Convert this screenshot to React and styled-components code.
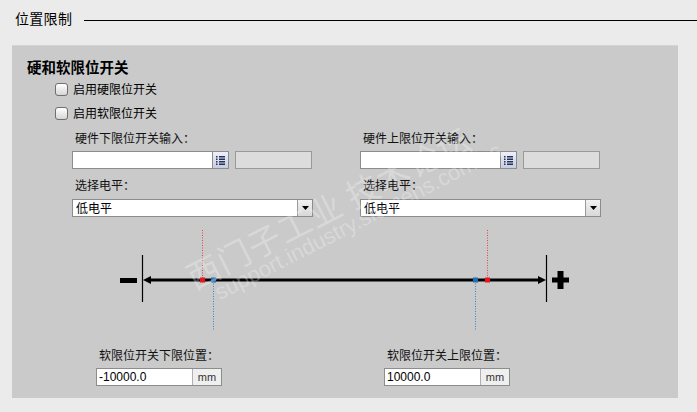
import React from "react";
import styled, { createGlobalStyle } from "styled-components";

const GlobalStyle = createGlobalStyle`
  body {
    margin: 0;
    background: #ebebeb;
    font-family: "Noto Sans CJK SC", "Liberation Sans", sans-serif;
    color: #000;
  }
`;

function App() {
  return (
    <Page>
      <GlobalStyle />
      <TitleRow>
        <Title>位置限制</Title>
        <Rule />
      </TitleRow>
      <Panel>
        <Heading>硬和软限位开关</Heading>
        <CheckRow>
          <CheckBox />
          <span>启用硬限位开关</span>
        </CheckRow>
        <CheckRow>
          <CheckBox />
          <span>启用软限位开关</span>
        </CheckRow>
        <Columns left={60} gap={47}>
          <Field label="硬件下限位开关输入：" />
          <Field label="硬件上限位开关输入：" />
        </Columns>
        <AxisDiagram />
        <Columns left={84} gap={162}>
          <LimitField label="软限位开关下限位置：" value="-10000.0" />
          <LimitField label="软限位开关上限位置：" value="10000.0" />
        </Columns>
      </Panel>
      <Watermark>
        <span>西门子工业 技术论坛</span>
        <small>support.industry.siemens.com/cs</small>
      </Watermark>
    </Page>
  );
}

function Field({ label }) {
  return (
    <Column>
      <Label>{label}</Label>
      <InputRow>
        <TextBox />
        <ListButton>
          <svg width="9" height="9" viewBox="0 0 9 9">
            <g fill="#23325a">
              <rect x="0" y="0" width="1.5" height="1.5" />
              <rect x="0" y="2.5" width="1.5" height="1.5" />
              <rect x="0" y="5" width="1.5" height="1.5" />
              <rect x="0" y="7.5" width="1.5" height="1.5" />
              <rect x="3" y="0" width="6" height="1.5" />
              <rect x="3" y="2.5" width="6" height="1.5" />
              <rect x="3" y="5" width="6" height="1.5" />
              <rect x="3" y="7.5" width="6" height="1.5" />
            </g>
          </svg>
        </ListButton>
        <GrayBox />
      </InputRow>
      <Label second>选择电平：</Label>
      <Select>
        <SelectText>低电平</SelectText>
        <SelectArrow>
          <svg width="7" height="4" viewBox="0 0 7 4">
            <polygon points="0,0 7,0 3.5,4" fill="#000" />
          </svg>
        </SelectArrow>
      </Select>
    </Column>
  );
}

function LimitField({ label, value }) {
  return (
    <LimitColumn>
      <Label>{label}</Label>
      <NumberBox>
        <NumberValue>{value}</NumberValue>
        <Unit>mm</Unit>
      </NumberBox>
    </LimitColumn>
  );
}

function AxisDiagram() {
  return (
    <Axis width="666" height="112" viewBox="0 0 666 112">
      <rect x="108" y="55" width="17" height="5" fill="#000" />
      <line x1="130.5" y1="32" x2="130.5" y2="79" stroke="#000" strokeWidth="1.2" />
      <line x1="534.5" y1="32" x2="534.5" y2="79" stroke="#000" strokeWidth="1.2" />
      <rect x="136" y="55.5" width="390" height="3" fill="#000" />
      <polygon points="131,57 139,53 139,61" fill="#000" />
      <polygon points="534,57 526,53 526,61" fill="#000" />
      <rect x="540" y="54.5" width="17" height="5" fill="#000" />
      <rect x="545.5" y="48" width="6" height="18" fill="#000" />
      <line x1="190.5" y1="7" x2="190.5" y2="56" stroke="#e04848" strokeWidth="1" strokeDasharray="1 1.5" />
      <line x1="201.5" y1="58" x2="201.5" y2="108" stroke="#3a86c8" strokeWidth="1" strokeDasharray="1 1.5" />
      <line x1="475.5" y1="7" x2="475.5" y2="56" stroke="#e04848" strokeWidth="1" strokeDasharray="1 1.5" />
      <line x1="463.5" y1="58" x2="463.5" y2="108" stroke="#3a86c8" strokeWidth="1" strokeDasharray="1 1.5" />
      <rect x="188" y="54.5" width="5" height="5" fill="#e8141e" />
      <rect x="199" y="54.5" width="5" height="5" fill="#1f6fb5" />
      <rect x="461" y="54.5" width="5" height="5" fill="#1f6fb5" />
      <rect x="473" y="54.5" width="5" height="5" fill="#e8141e" />
    </Axis>
  );
}

const Page = styled.div`
  position: relative;
  width: 697px;
  height: 412px;
  overflow: hidden;
  background: #ebebeb;
`;

const TitleRow = styled.div`
  display: flex;
  align-items: center;
  height: 20px;
  padding: 8px 0 0 15px;
`;

const Title = styled.div`
  font-size: 14px;
  line-height: 20px;
  letter-spacing: 0.3px;
`;

const Rule = styled.div`
  flex: 1;
  height: 1px;
  margin: 4px 0 0 12px;
  background: #000;
`;

const Panel = styled.div`
  height: 353px;
  margin: 17px 19px 0 12px;
  background: #cacaca;
  border-top: 1px solid #d4d4d4;
  box-sizing: border-box;
  font-size: 12px;
`;

const Heading = styled.div`
  margin: 12px 0 0 15px;
  height: 18px;
  line-height: 18px;
  font-size: 14.5px;
  font-weight: bold;
`;

const CheckRow = styled.div`
  display: flex;
  align-items: center;
  gap: 5px;
  height: 24px;
  padding-left: 43px;
  font-size: 12px;

  &:first-of-type {
    margin-top: 2px;
  }
`;

const CheckBox = styled.span`
  display: inline-block;
  width: 11px;
  height: 11px;
  border: 1px solid #6f6f6f;
  border-radius: 3px;
  background: linear-gradient(#ffffff, #d6d6d6);
  margin-top: 2px;
  & + span {
    margin-top: 1px;
  }
`;

const Columns = styled.div`
  display: flex;
  gap: ${(p) => p.gap}px;
  padding-left: ${(p) => p.left}px;
  margin-top: 5px;
`;

const Column = styled.div`
  display: flex;
  flex-direction: column;
  width: 241px;
`;

const LimitColumn = styled.div`
  display: flex;
  flex-direction: column;
  width: 126px;
  margin-top: 6px;
`;

const Label = styled.div`
  height: 18px;
  line-height: 18px;
  padding-left: 3px;
  font-size: 12px;
  color: #111;
  margin-top: ${(p) => (p.second ? 7 : 0)}px;
  margin-bottom: ${(p) => (p.second ? 5 : 4)}px;
`;

const InputRow = styled.div`
  display: flex;
  height: 18px;
`;

const TextBox = styled.div`
  width: 139px;
  border: 1px solid #8c8c8c;
  border-right: none;
  background: #fff;
`;

const ListButton = styled.div`
  display: flex;
  align-items: center;
  justify-content: center;
  width: 15px;
  border: 1px solid #8c8c8c;
  background: linear-gradient(#eef0f8, #c8cce0);
`;

const GrayBox = styled.div`
  width: 75px;
  margin-left: 6px;
  border: 1px solid #9a9a9a;
  background: #dcdcdc;
`;

const Select = styled.div`
  display: flex;
  height: 18px;
  box-sizing: border-box;
  border: 1px solid #8c8c8c;
  background: #fff;
`;

const SelectText = styled.div`
  flex: 1;
  padding-left: 3px;
  line-height: 16px;
  font-size: 12px;
`;

const SelectArrow = styled.div`
  display: flex;
  align-items: center;
  justify-content: center;
  width: 14px;
  border-left: 1px solid #9a9a9a;
  background: linear-gradient(#f2f2f2, #d8d8d8);
`;

const Axis = styled.svg`
  display: block;
  margin-top: 6px;
`;

const NumberBox = styled.div`
  display: flex;
  height: 18px;
  box-sizing: border-box;
  border: 1px solid #8c8c8c;
  background: #fff;
`;

const NumberValue = styled.div`
  flex: 1;
  padding-left: 2px;
  line-height: 16px;
  font-family: "Liberation Sans", Arial, sans-serif;
  font-size: 12px;
`;

const Unit = styled.div`
  width: 28px;
  line-height: 16px;
  text-align: center;
  border-left: 1px solid #b0b0b0;
  background: #efefef;
  font-family: "Liberation Sans", Arial, sans-serif;
  font-size: 11px;
  color: #333;
`;

const Watermark = styled.div`
  position: absolute;
  left: 180px;
  top: 262px;
  display: flex;
  flex-direction: column;
  transform: rotate(-27deg);
  transform-origin: left top;
  color: rgba(255, 255, 255, 0.28);
  pointer-events: none;
  white-space: nowrap;

  span {
    font-size: 33px;
    line-height: 36px;
    letter-spacing: 1px;
  }
  small {
    font-family: "Liberation Sans", Arial, sans-serif;
    font-size: 22px;
    margin-left: 18px;
    margin-top: -4px;
  }
`;

export default App;
